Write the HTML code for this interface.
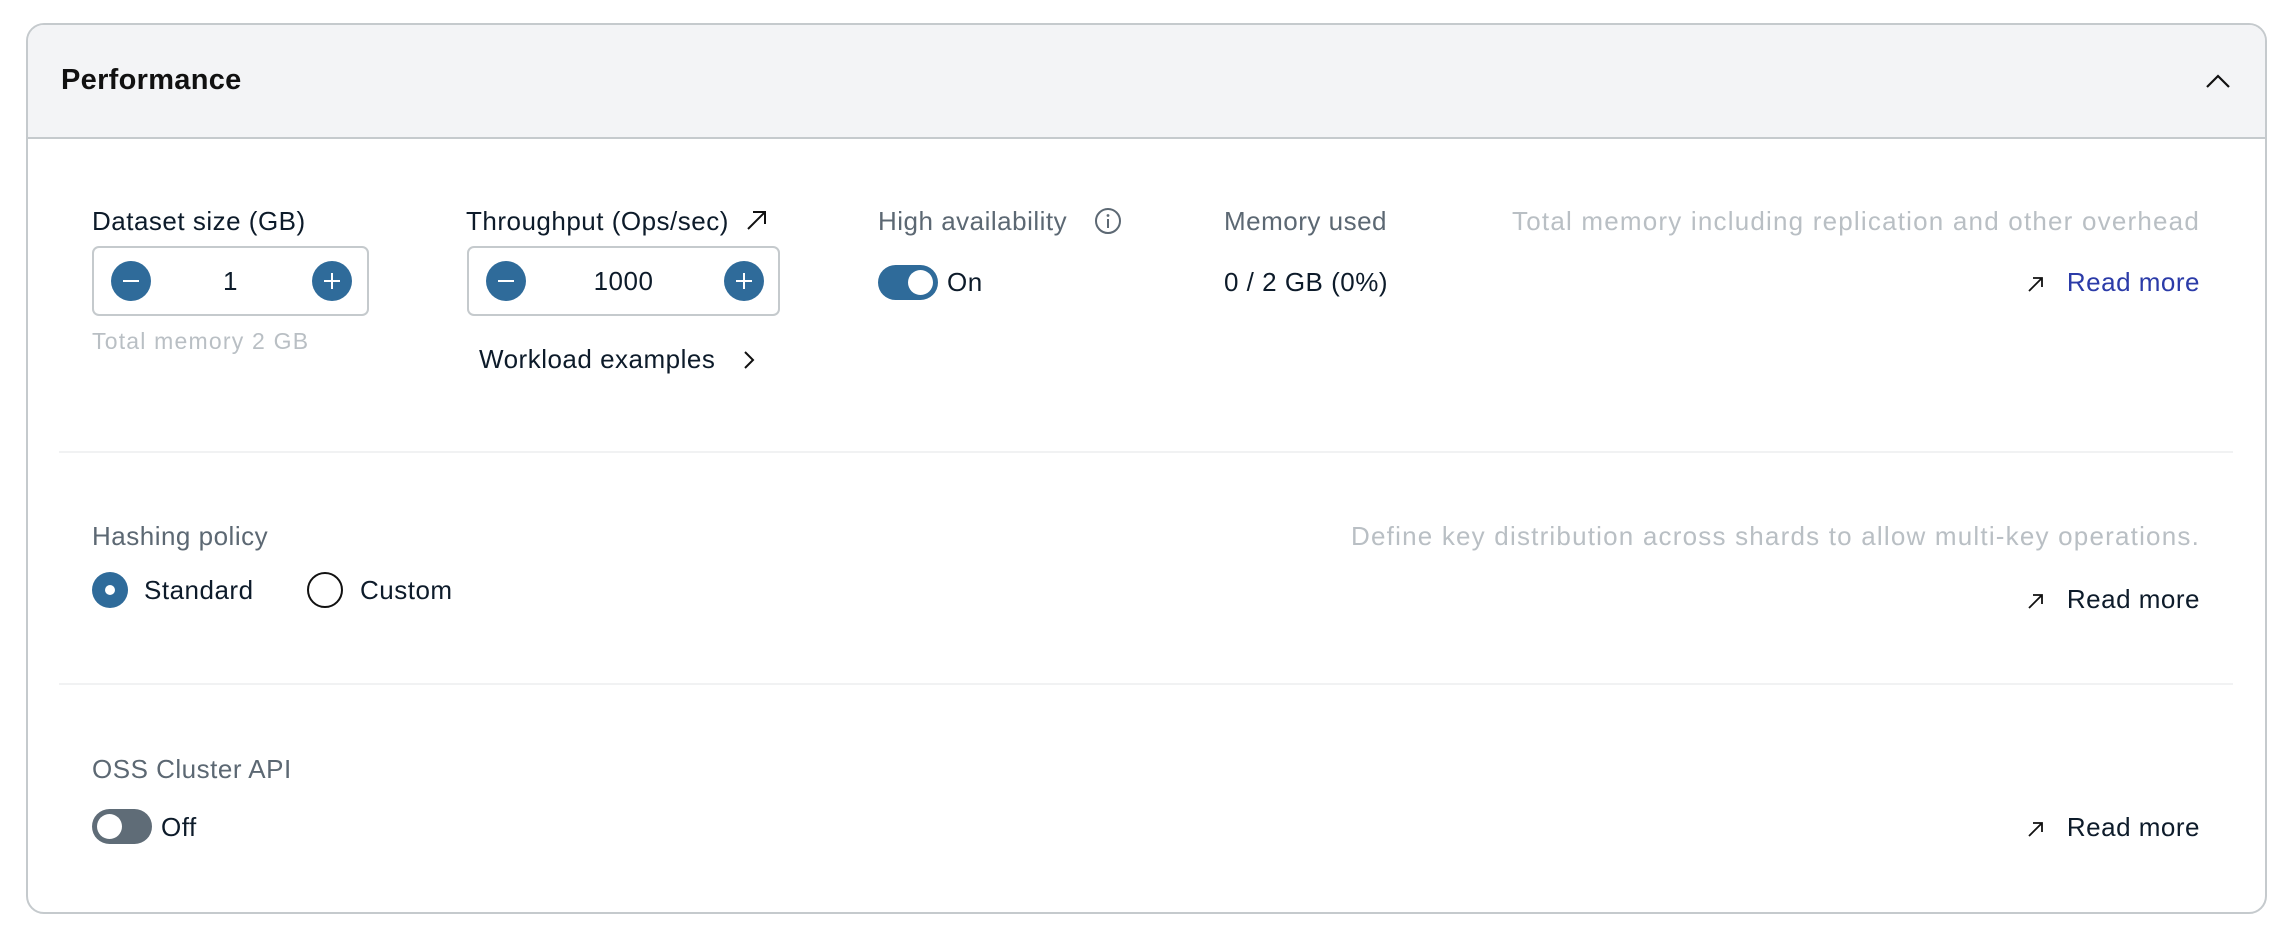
<!DOCTYPE html>
<html><head><meta charset="utf-8"><style>
*{margin:0;padding:0;box-sizing:border-box}
body{width:2296px;height:938px;background:#fff;font-family:"Liberation Sans",Arial,sans-serif;position:relative;overflow:hidden;color:#0d1b2a}
.card{position:absolute;left:26px;top:23px;width:2241px;height:891px;border:2px solid #c5cacd;border-radius:18px;overflow:hidden}
.hdr{position:absolute;left:0;top:0;right:0;height:114px;background:#f3f4f6;border-bottom:2px solid #c5cacd}
.t{position:absolute;white-space:nowrap;line-height:36px;font-size:26px;letter-spacing:0.5px}
.g{color:#5c6873}
.l{color:#b9bfc4;letter-spacing:1.2px}
.step{position:absolute;height:70px;border:2px solid #c5cacd;border-radius:7px;background:#fff}
.c{position:absolute;width:40px;height:40px;border-radius:50%;background:#2f6b9a;top:13px}
.c:before{content:"";position:absolute;left:12px;top:19px;width:16px;height:2px;background:#fff}
.c.p:after{content:"";position:absolute;left:19px;top:12px;width:2px;height:16px;background:#fff}
.div{position:absolute;left:59px;width:2174px;height:2px;background:#f1f2f3}
.tog{position:absolute;width:60px;height:35px;border-radius:18px}
.tog i{position:absolute;top:5px;width:25px;height:25px;border-radius:50%;background:#fff}
</style></head><body>
<div class="card"><div class="hdr"></div></div>
<div class="t" style="left:61px;top:62px;font-size:29px;font-weight:bold;color:#111;letter-spacing:0.3px">Performance</div>
<svg style="position:absolute;left:2204px;top:72px" width="28" height="18"><path d="M3 15 L14 4 L25 15" fill="none" stroke="#111" stroke-width="2.2"/></svg>

<div class="t" style="left:92px;top:203px">Dataset size (GB)</div>
<div class="step" style="left:92px;top:246px;width:277px"><div class="c" style="left:17px"></div><div class="t" style="left:0;width:273px;text-align:center;top:15px">1</div><div class="c p" style="left:218px"></div></div>
<div class="t l" style="left:92px;top:323px;font-size:23px">Total memory 2 GB</div>

<div class="t" style="left:466px;top:203px">Throughput (Ops/sec)</div>
<svg style="position:absolute;left:744px;top:207px" width="26" height="26"><path d="M4 22 L21 5 M9 5 H21 V17" fill="none" stroke="#111" stroke-width="2"/></svg>
<div class="step" style="left:467px;top:246px;width:313px"><div class="c" style="left:17px"></div><div class="t" style="left:0;width:309px;text-align:center;top:15px">1000</div><div class="c p" style="left:255px"></div></div>
<div class="t" style="left:479px;top:341px">Workload examples</div>
<svg style="position:absolute;left:742px;top:350px" width="14" height="20"><path d="M3 2 L11 10 L3 18" fill="none" stroke="#111" stroke-width="2"/></svg>

<div class="t g" style="left:878px;top:203px">High availability</div>
<svg style="position:absolute;left:1094px;top:207px" width="28" height="28"><circle cx="14" cy="14" r="12" fill="none" stroke="#5c6873" stroke-width="2"/><rect x="13" y="12" width="2" height="9" fill="#5c6873"/><circle cx="14" cy="8.5" r="1.4" fill="#5c6873"/></svg>
<div class="tog" style="left:878px;top:265px;background:#2f6b9a"><i style="left:30px"></i></div>
<div class="t" style="left:947px;top:264px">On</div>

<div class="t g" style="left:1224px;top:203px">Memory used</div>
<div class="t" style="left:1224px;top:264px">0 / 2 GB (0%)</div>
<div class="t l" style="right:96px;top:203px">Total memory including replication and other overhead</div>
<div class="t" style="right:96px;top:264px;color:#2b3ba8">Read more</div>
<svg style="position:absolute;left:2026px;top:274px" width="20" height="20"><path d="M3 17 L16 4 M7 4 H16 V13" fill="none" stroke="#111" stroke-width="1.8"/></svg>

<div class="div" style="top:451px"></div>

<div class="t g" style="left:92px;top:518px">Hashing policy</div>
<div style="position:absolute;left:92px;top:572px;width:36px;height:36px;border-radius:50%;background:#2f6b9a"><div style="position:absolute;left:13px;top:13px;width:10px;height:10px;border-radius:50%;background:#fff"></div></div>
<div class="t" style="left:144px;top:572px">Standard</div>
<div style="position:absolute;left:307px;top:572px;width:36px;height:36px;border-radius:50%;border:2px solid #111"></div>
<div class="t" style="left:360px;top:572px">Custom</div>
<div class="t l" style="right:96px;top:518px">Define key distribution across shards to allow multi-key operations.</div>
<div class="t" style="right:96px;top:581px">Read more</div>
<svg style="position:absolute;left:2026px;top:591px" width="20" height="20"><path d="M3 17 L16 4 M7 4 H16 V13" fill="none" stroke="#111" stroke-width="1.8"/></svg>

<div class="div" style="top:683px"></div>

<div class="t g" style="left:92px;top:751px">OSS Cluster API</div>
<div class="tog" style="left:92px;top:809px;background:#5f6c77"><i style="left:5px"></i></div>
<div class="t" style="left:161px;top:809px">Off</div>
<div class="t" style="right:96px;top:809px">Read more</div>
<svg style="position:absolute;left:2026px;top:819px" width="20" height="20"><path d="M3 17 L16 4 M7 4 H16 V13" fill="none" stroke="#111" stroke-width="1.8"/></svg>
</body></html>
